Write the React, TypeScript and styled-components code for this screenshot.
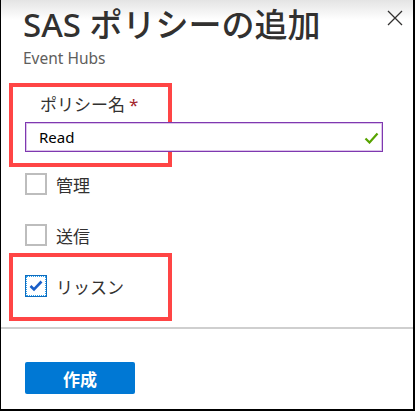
import React from 'react';
import styled, { createGlobalStyle } from 'styled-components';

const GlobalStyle = createGlobalStyle`
  html, body {
    margin: 0;
    padding: 0;
    background: #fff;
  }
  body {
    font-family: "Noto Sans", "Noto Sans CJK JP", sans-serif;
    color: #323130;
  }
`;

const Panel = styled.div`
  position: relative;
  box-sizing: border-box;
  width: 415px;
  height: 411px;
  border-left: 1px solid #000;
  border-right: 2px solid #000;
  border-bottom: 2px solid #000;
  background: linear-gradient(to bottom, #e4e4e4 0, #fff 20px);
  display: flex;
  flex-direction: column;
`;

const Header = styled.div`
  display: flex;
  justify-content: space-between;
  align-items: flex-start;
  padding: 0 10px 0 22px;
`;

const TitleBlock = styled.div`
  display: flex;
  flex-direction: column;
`;

const Title = styled.h1`
  margin: 5px 0 0;
  font-size: 33px;
  line-height: 40px;
  font-weight: 500;
  color: #323130;
  white-space: nowrap;
`;

const Subtitle = styled.div`
  margin-top: 3px;
  font-size: 15.5px;
  line-height: 20px;
  color: #605e5c;
`;

const CloseButton = styled.button`
  margin-top: 10px;
  width: 16px;
  height: 16px;
  padding: 0;
  border: none;
  background: transparent;
  display: flex;
  cursor: pointer;
`;

const Body = styled.div`
  display: flex;
  flex-direction: column;
  padding: 26px 29px 0 24px;
`;

const Field = styled.div`
  position: relative;
  display: flex;
  flex-direction: column;
`;

const Highlight = styled.div<{ $top: number; $height: number }>`
  position: absolute;
  left: -16px;
  top: ${({ $top }) => $top}px;
  width: 163px;
  height: ${({ $height }) => $height}px;
  box-sizing: border-box;
  border: 4px solid #ff4545;
  pointer-events: none;
`;

const Label = styled.label`
  padding-left: 15px;
  font-size: 17px;
  line-height: 22px;
  color: #323130;
`;

const Required = styled.span`
  margin-left: 4px;
  color: #a4262c;
`;

const InputWrap = styled.div`
  position: relative;
  margin-top: 6px;
`;

const TextInput = styled.input`
  box-sizing: border-box;
  width: 358px;
  height: 30px;
  padding: 0 30px 0 13px;
  border: 1px solid #7e38b0;
  box-shadow: 0 0 0 1px #dcc3ea inset;
  outline: none;
  font-family: "Noto Sans", "Noto Sans CJK JP", sans-serif;
  font-size: 15px;
  color: #000;
  background: #fff;
`;

const ValidIcon = styled.svg`
  position: absolute;
  right: 5px;
  top: 10px;
`;

const CheckList = styled.div`
  display: flex;
  flex-direction: column;
  gap: 29px;
  margin-top: 21px;
`;

const CheckRow = styled.label`
  position: relative;
  display: flex;
  align-items: center;
  gap: 9px;
  height: 22px;
  font-size: 17px;
  color: #323130;
`;

const Box = styled.span<{ $checked?: boolean }>`
  box-sizing: border-box;
  width: 22px;
  height: 22px;
  display: flex;
  align-items: center;
  justify-content: center;
  background: #fff;
  border: ${({ $checked }) => ($checked ? '1px solid #0f6cbd' : '2px solid #bdbdbd')};
  outline: ${({ $checked }) => ($checked ? '1px dotted #2aa0f0' : 'none')};
  outline-offset: -2px;
`;

const Divider = styled.hr`
  margin: 30px 0 0;
  border: none;
  border-top: 2px solid #cfcfcf;
  height: 0;
`;

const Footer = styled.div`
  padding: 33px 24px 0;
`;

const PrimaryButton = styled.button`
  width: 110px;
  height: 32px;
  border: none;
  border-radius: 2px;
  background: #0078d4;
  color: #fff;
  font-family: "Noto Sans CJK JP", sans-serif;
  font-weight: 700;
  font-size: 17px;
  cursor: pointer;
`;

const options = [
  { label: '管理', checked: false },
  { label: '送信', checked: false },
  { label: 'リッスン', checked: true },
];

export default function App() {
  return (
    <>
      <GlobalStyle />
      <Panel>
        <Header>
          <TitleBlock>
            <Title>SAS ポリシーの追加</Title>
            <Subtitle>Event Hubs</Subtitle>
          </TitleBlock>
          <CloseButton type="button" aria-label="閉じる">
            <svg width="16" height="16" viewBox="0 0 16 16">
              <path d="M1 1 L15 15 M15 1 L1 15" stroke="#323130" strokeWidth="1.3" fill="none" />
            </svg>
          </CloseButton>
        </Header>

        <Body>
          <Field>
            <Highlight $top={-11} $height={84} />
            <Label>
              ポリシー名<Required>*</Required>
            </Label>
            <InputWrap>
              <TextInput defaultValue="Read" />
              <ValidIcon width="15" height="12" viewBox="0 0 15 12">
                <path d="M1.5 6.5 L5.5 10.5 L13.5 1.5" stroke="#57a300" strokeWidth="2.2" fill="none" />
              </ValidIcon>
            </InputWrap>
          </Field>

          <CheckList>
            {options.map((o) => (
              <CheckRow key={o.label}>
                {o.checked && <Highlight $top={-22} $height={68} />}
                <Box $checked={o.checked}>
                  {o.checked && (
                    <svg width="14" height="12" viewBox="0 0 14 12">
                      <path d="M1.5 6 L5 9.5 L12.5 1.5" stroke="#1a5fc8" strokeWidth="2.6" fill="none" />
                    </svg>
                  )}
                </Box>
                {o.label}
              </CheckRow>
            ))}
          </CheckList>
        </Body>

        <Divider />

        <Footer>
          <PrimaryButton type="button">作成</PrimaryButton>
        </Footer>
      </Panel>
    </>
  );
}
